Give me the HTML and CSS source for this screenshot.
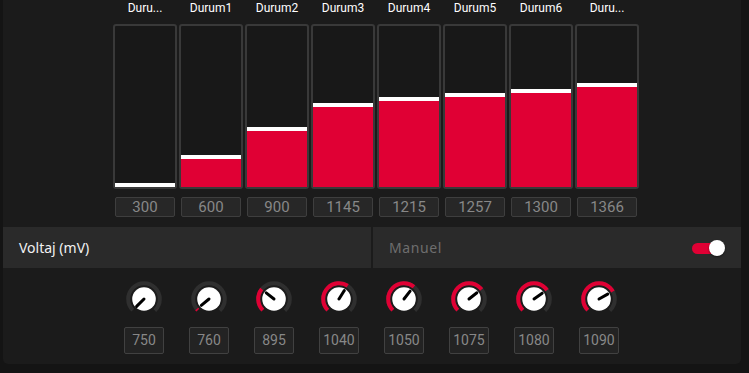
FILE: index.html
```html
<!DOCTYPE html>
<html>
<head>
<meta charset="utf-8">
<link rel="stylesheet" href="styles.css">
</head>
<body>
<div class="panel">
  <div class="labels">
    <div class="lbl">Duru...</div><div class="lbl">Durum1</div><div class="lbl">Durum2</div><div class="lbl">Durum3</div>
    <div class="lbl">Durum4</div><div class="lbl">Durum5</div><div class="lbl">Durum6</div><div class="lbl">Duru...</div>
  </div>
  <div class="bars">
    <div class="bar"><div class="fill" style="height:4px"></div></div>
    <div class="bar"><div class="fill" style="height:32px"></div></div>
    <div class="bar"><div class="fill" style="height:60px"></div></div>
    <div class="bar"><div class="fill" style="height:84px"></div></div>
    <div class="bar"><div class="fill" style="height:90px"></div></div>
    <div class="bar"><div class="fill" style="height:94px"></div></div>
    <div class="bar"><div class="fill" style="height:98px"></div></div>
    <div class="bar"><div class="fill" style="height:104px"></div></div>
  </div>
  <div class="vals">
    <div class="cell"><div class="vbox">300</div></div>
    <div class="cell"><div class="vbox">600</div></div>
    <div class="cell"><div class="vbox">900</div></div>
    <div class="cell"><div class="vbox">1145</div></div>
    <div class="cell"><div class="vbox">1215</div></div>
    <div class="cell"><div class="vbox">1257</div></div>
    <div class="cell"><div class="vbox">1300</div></div>
    <div class="cell"><div class="vbox">1366</div></div>
  </div>
  <div class="header">
    <div class="hcell"><span class="htitle">Voltaj (mV)</span></div>
    <div class="hcell hright"><span class="hmode">Manuel</span>
      <div class="toggle"><div class="track"></div><div class="knob"></div></div>
    </div>
  </div>
  <div class="dials">
    <div class="dial">
      <svg width="40" height="40" viewBox="0 0 40 40"><circle cx="20" cy="20" r="15.8" class="ring" stroke-dasharray="74.45 99.27" transform="rotate(135 20 20)"/><circle cx="20" cy="20" r="11.8" fill="#fff"/><line x1="20" y1="20" x2="12.6" y2="27.4" class="ptr"/></svg>
      <div class="dbox">750</div>
    </div>
    <div class="dial">
      <svg width="40" height="40" viewBox="0 0 40 40"><circle cx="20" cy="20" r="15.8" class="ring" stroke-dasharray="74.45 99.27" transform="rotate(135 20 20)"/><circle cx="20" cy="20" r="15.8" class="red" stroke-dasharray="1.6 99.27" transform="rotate(135 20 20)"/><circle cx="20" cy="20" r="11.8" fill="#fff"/><line x1="20" y1="20" x2="12.3" y2="26.3" class="ptr"/></svg>
      <div class="dbox">760</div>
    </div>
    <div class="dial">
      <svg width="40" height="40" viewBox="0 0 40 40"><circle cx="20" cy="20" r="15.8" class="ring" stroke-dasharray="74.45 99.27" transform="rotate(135 20 20)"/><circle cx="20" cy="20" r="15.8" class="red" stroke-dasharray="23 99.27" transform="rotate(135 20 20)"/><circle cx="20" cy="20" r="11.8" fill="#fff"/><line x1="20" y1="20" x2="12.2" y2="13.8" class="ptr"/></svg>
      <div class="dbox">895</div>
    </div>
    <div class="dial">
      <svg width="40" height="40" viewBox="0 0 40 40"><circle cx="20" cy="20" r="15.8" class="ring" stroke-dasharray="74.45 99.27" transform="rotate(135 20 20)"/><circle cx="20" cy="20" r="15.8" class="red" stroke-dasharray="46 99.27" transform="rotate(135 20 20)"/><circle cx="20" cy="20" r="11.8" fill="#fff"/><line x1="20" y1="20" x2="25.3" y2="11.5" class="ptr"/></svg>
      <div class="dbox">1040</div>
    </div>
    <div class="dial">
      <svg width="40" height="40" viewBox="0 0 40 40"><circle cx="20" cy="20" r="15.8" class="ring" stroke-dasharray="74.45 99.27" transform="rotate(135 20 20)"/><circle cx="20" cy="20" r="15.8" class="red" stroke-dasharray="47.6 99.27" transform="rotate(135 20 20)"/><circle cx="20" cy="20" r="11.8" fill="#fff"/><line x1="20" y1="20" x2="26.1" y2="12.1" class="ptr"/></svg>
      <div class="dbox">1050</div>
    </div>
    <div class="dial">
      <svg width="40" height="40" viewBox="0 0 40 40"><circle cx="20" cy="20" r="15.8" class="ring" stroke-dasharray="74.45 99.27" transform="rotate(135 20 20)"/><circle cx="20" cy="20" r="15.8" class="red" stroke-dasharray="51.5 99.27" transform="rotate(135 20 20)"/><circle cx="20" cy="20" r="11.8" fill="#fff"/><line x1="20" y1="20" x2="27.9" y2="13.8" class="ptr"/></svg>
      <div class="dbox">1075</div>
    </div>
    <div class="dial">
      <svg width="40" height="40" viewBox="0 0 40 40"><circle cx="20" cy="20" r="15.8" class="ring" stroke-dasharray="74.45 99.27" transform="rotate(135 20 20)"/><circle cx="20" cy="20" r="15.8" class="red" stroke-dasharray="52.3 99.27" transform="rotate(135 20 20)"/><circle cx="20" cy="20" r="11.8" fill="#fff"/><line x1="20" y1="20" x2="28.2" y2="14.2" class="ptr"/></svg>
      <div class="dbox">1080</div>
    </div>
    <div class="dial">
      <svg width="40" height="40" viewBox="0 0 40 40"><circle cx="20" cy="20" r="15.8" class="ring" stroke-dasharray="74.45 99.27" transform="rotate(135 20 20)"/><circle cx="20" cy="20" r="15.8" class="red" stroke-dasharray="53.9 99.27" transform="rotate(135 20 20)"/><circle cx="20" cy="20" r="11.8" fill="#fff"/><line x1="20" y1="20" x2="28.7" y2="15.1" class="ptr"/></svg>
      <div class="dbox">1090</div>
    </div>
  </div>
</div>
</body>
</html>
```

FILE: styles.css
```css
html, body {
  margin: 0;
  padding: 0;
}
body {
  background: #141414;
  width: 749px;
  height: 373px;
  overflow: hidden;
  font-family: Roboto, "Liberation Sans", sans-serif;
}
.panel {
  margin-left: 3px;
  width: 738px;
  height: 364px;
  background: #1b1b1b;
  border-radius: 0 0 5px 5px;
  box-sizing: border-box;
}
.labels, .bars, .vals {
  display: flex;
  gap: 2px;
  padding-left: 110px;
}
.lbl {
  width: 64px;
  text-align: center;
  color: #ffffff;
  font-size: 12px;
  line-height: 16px;
  font-weight: 400;
}
.bars {
  margin-top: 8px;
}
.bar {
  width: 64px;
  height: 165px;
  box-sizing: border-box;
  border: 2px solid #393939;
  border-radius: 3px;
  background: #181818;
  display: flex;
  flex-direction: column;
  justify-content: flex-end;
}
.fill {
  background: #e00034;
  border-top: 4px solid #ffffff;
  box-sizing: border-box;
}
.vals {
  margin-top: 8px;
}
.cell {
  width: 64px;
  display: flex;
  justify-content: center;
}
.vbox {
  width: 60px;
  height: 20px;
  box-sizing: border-box;
  border: 1px solid #3e3e3e;
  border-radius: 2px;
  background: #272727;
  color: #888888;
  font-size: 15px;
  line-height: 18px;
  text-align: center;
}
.header {
  margin-top: 10px;
  display: flex;
  gap: 2px;
}
.hcell {
  flex: 1;
  height: 41px;
  background: #2a2a2a;
  display: flex;
  align-items: center;
  padding-left: 16px;
  padding-right: 16px;
}
.htitle {
  color: #f2f2f2;
  font-size: 14px;
  font-family: "Noto Sans", Roboto, sans-serif;
}
.hright {
  justify-content: space-between;
}
.hmode {
  color: #6e6e6e;
  font-size: 14px;
  letter-spacing: 0.6px;
  font-family: "Noto Sans", Roboto, sans-serif;
}
.toggle {
  position: relative;
  width: 33px;
  height: 16px;
}
.track {
  position: absolute;
  left: 0;
  top: 3px;
  width: 28px;
  height: 11px;
  border-radius: 6px;
  background: #e00034;
}
.knob {
  position: absolute;
  right: 0;
  top: 0;
  width: 16px;
  height: 16px;
  border-radius: 50%;
  background: #ffffff;
  box-shadow: 0 1px 2px rgba(0,0,0,0.5);
}
.dials {
  display: flex;
  gap: 25px;
  padding-left: 121px;
  margin-top: 11px;
}
.dial {
  width: 40px;
  display: flex;
  flex-direction: column;
  align-items: center;
  gap: 8px;
}
.dial svg {
  display: block;
}
.ring {
  fill: none;
  stroke: #2f2f2f;
  stroke-width: 4;
}
.red {
  fill: none;
  stroke: #e00034;
  stroke-width: 4;
}
.ptr {
  stroke: #000;
  stroke-width: 3;
  stroke-linecap: round;
}
.dbox {
  width: 40px;
  height: 27px;
  box-sizing: border-box;
  border: 1px solid #414141;
  border-radius: 2px;
  background: #232323;
  color: #888888;
  font-size: 14px;
  line-height: 25px;
  text-align: center;
}
```
